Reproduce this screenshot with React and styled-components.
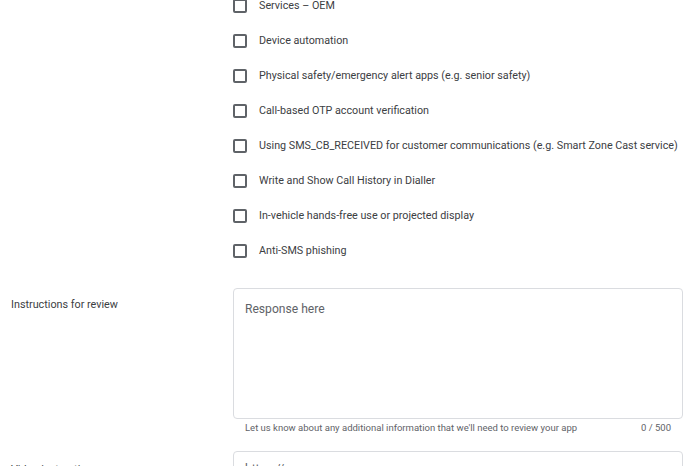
import React from "react";
import styled, { createGlobalStyle } from "styled-components";

const GlobalStyle = createGlobalStyle`
  html, body {
    margin: 0;
    padding: 0;
    background: #ffffff;
    overflow: hidden;
  }
  body {
    font-family: Roboto, "Liberation Sans", Arial, sans-serif;
    color: #3c4043;
  }
`;

const options = [
  "Services – OEM",
  "Device automation",
  "Physical safety/emergency alert apps (e.g. senior safety)",
  "Call-based OTP account verification",
  "Using SMS_CB_RECEIVED for customer communications (e.g. Smart Zone Cast service)",
  "Write and Show Call History in Dialler",
  "In-vehicle hands-free use or projected display",
  "Anti-SMS phishing",
];

const Page = styled.div`
  width: 690px;
  height: 466px;
  overflow: hidden;
`;

// page is scrolled: first row is cut at the top
const Scroller = styled.div`
  margin-top: -12px;
`;

const Section = styled.div`
  display: grid;
  grid-template-columns: 233px 450px;
  padding-top: ${({ top }) => top || 0}px;
`;

const Label = styled.div`
  padding-left: 11px;
  padding-top: ${({ pt }) => pt || 9}px;
  font-size: 10.8px;
  line-height: 16px;
  color: #3c4043;
`;

const OptionList = styled.div`
  display: flex;
  flex-direction: column;
`;

const OptionRow = styled.label`
  display: flex;
  align-items: center;
  gap: 12px;
  height: 35px;
  font-size: 10.75px;
  color: #3c4043;
  white-space: nowrap;
`;

const Box = styled.span`
  box-sizing: border-box;
  flex: none;
  width: 14px;
  height: 14px;
  border: 2px solid #5f6368;
  border-radius: 2px;
`;

const Field = styled.div`
  display: flex;
  flex-direction: column;
`;

const TextArea = styled.div`
  box-sizing: border-box;
  height: ${({ h }) => h}px;
  border: 1px solid #dadce0;
  border-radius: 4px;
  padding: ${({ pt }) => pt}px 11px 0 11px;
  font-size: 12.1px;
  line-height: 16px;
  color: #5f6368;
  white-space: nowrap;
`;

const Helper = styled.div`
  display: flex;
  justify-content: space-between;
  padding: 3px 12px 0 12px;
  height: 29px;
  font-size: 9.5px;
  line-height: 12px;
  color: #5f6368;
`;

export default function App() {
  return (
    <Page>
      <GlobalStyle />
      <Scroller>
        <Section>
          <div />
          <OptionList>
            {options.map((o) => (
              <OptionRow key={o}>
                <Box />
                {o}
              </OptionRow>
            ))}
          </OptionList>
        </Section>

        <Section top={20}>
          <Label>Instructions for review</Label>
          <Field>
            <TextArea h={131} pt={12}>Response here</TextArea>
            <Helper>
              <span>
                Let us know about any additional information that we'll need to review your app
              </span>
              <span>0 / 500</span>
            </Helper>
          </Field>
        </Section>

        <Section>
          <Label pt={11}>Video instructions</Label>
          <Field>
            <TextArea h={48} pt={9}>https://</TextArea>
          </Field>
        </Section>
      </Scroller>
    </Page>
  );
}
